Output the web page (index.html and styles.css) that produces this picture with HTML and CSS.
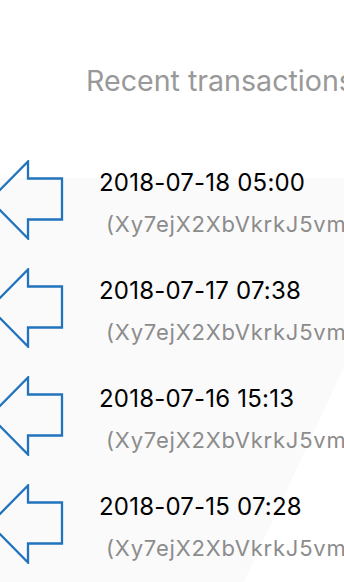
FILE: index.html
```html
<!DOCTYPE html>
<html lang="en">
<head>
<meta charset="utf-8">
<title>Recent transactions</title>
<link rel="stylesheet" href="styles.css">
</head>
<body>
<main class="page">
  <h1 class="title">Recent transactions</h1>
  <ul class="list">
    <li class="row">
      <svg class="arrow" viewBox="0 0 76 80" width="76" height="80" aria-hidden="true"><path d="M2 40 L40 1.5 L40 18.5 L74 18.5 L74 59.5 L40 59.5 L40 78.5 Z"/></svg>
      <div class="info"><div class="date">2018-07-18 05:00</div><div class="addr">(Xy7ejX2XbVkrkJ5vmQpT3nW)</div></div>
    </li>
    <li class="row">
      <svg class="arrow" viewBox="0 0 76 80" width="76" height="80" aria-hidden="true"><path d="M2 40 L40 1.5 L40 18.5 L74 18.5 L74 59.5 L40 59.5 L40 78.5 Z"/></svg>
      <div class="info"><div class="date">2018-07-17 07:38</div><div class="addr">(Xy7ejX2XbVkrkJ5vmQpT3nW)</div></div>
    </li>
    <li class="row">
      <svg class="arrow" viewBox="0 0 76 80" width="76" height="80" aria-hidden="true"><path d="M2 40 L40 1.5 L40 18.5 L74 18.5 L74 59.5 L40 59.5 L40 78.5 Z"/></svg>
      <div class="info"><div class="date">2018-07-16 15:13</div><div class="addr">(Xy7ejX2XbVkrkJ5vmQpT3nW)</div></div>
    </li>
    <li class="row">
      <svg class="arrow" viewBox="0 0 76 80" width="76" height="80" aria-hidden="true"><path d="M2 40 L40 1.5 L40 18.5 L74 18.5 L74 59.5 L40 59.5 L40 78.5 Z"/></svg>
      <div class="info"><div class="date">2018-07-15 07:28</div><div class="addr">(Xy7ejX2XbVkrkJ5vmQpT3nW)</div></div>
    </li>
  </ul>
</main>
</body>
</html>
```
FILE: styles.css
```css
html, body {
  margin: 0;
  padding: 0;
  background: #ffffff;
}
body {
  width: 344px;
  height: 582px;
  overflow: hidden;
  font-family: Inter, "Liberation Sans", Arial, sans-serif;
}
.page {
  position: relative;
  height: 582px;
  overflow: hidden;
}
.page::before {
  content: "";
  position: absolute;
  left: 0;
  top: 178px;
  width: 344px;
  height: 404px;
  background: #fafafb;
  clip-path: polygon(0 0, 344px 0, 344px 189px, 244px 404px, 0 404px);
  z-index: 0;
}
.title {
  position: relative;
  margin: 64px 0 0 0;
  padding-left: 86px;
  font-size: 28.6px;
  line-height: 34px;
  font-weight: 400;
  color: #999999;
  white-space: nowrap;
}
.list {
  position: relative;
  list-style: none;
  margin: 47.5px 0 0 0;
  padding: 0;
}
.row {
  display: flex;
  align-items: flex-start;
  height: 108px;
}
.arrow {
  flex: none;
  margin: 14px 0 0 -12px;
}
.arrow path {
  fill: none;
  stroke: #2273bd;
  stroke-width: 2.3;
  stroke-linejoin: miter;
}
.info {
  padding: 23.5px 0 0 35px;
  white-space: nowrap;
}
.date {
  font-size: 24px;
  line-height: 28px;
  letter-spacing: 0.2px;
  color: #000000;
}
.addr {
  margin: 14px 0 0 7px;
  font-size: 22px;
  line-height: 26px;
  letter-spacing: 0.8px;
  color: #8c8c8c;
}
```
